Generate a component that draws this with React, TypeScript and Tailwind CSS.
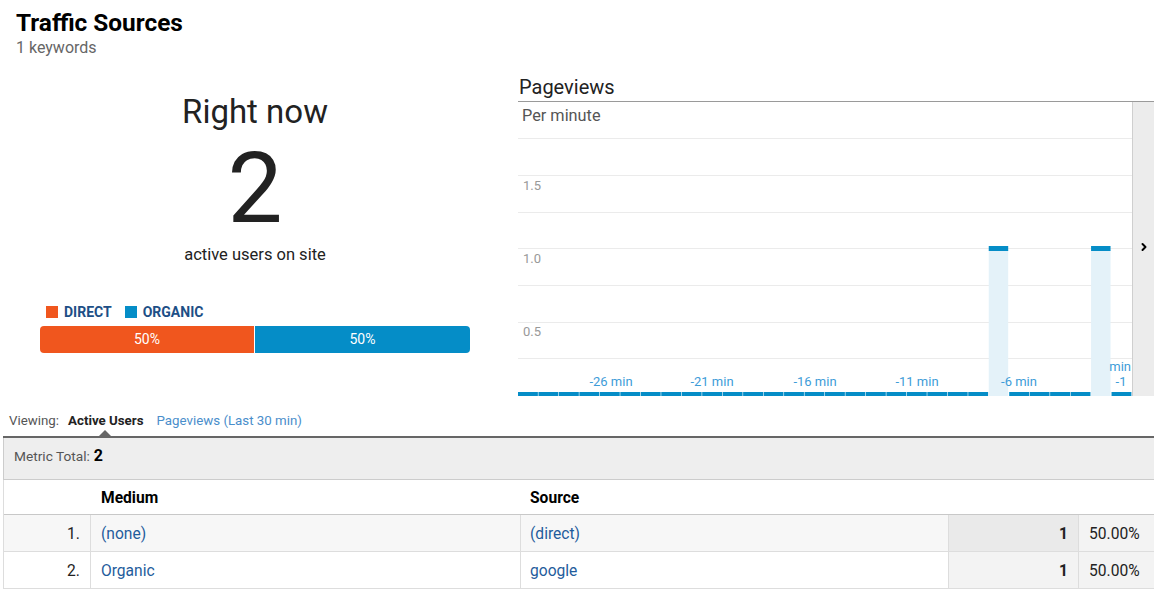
import React from 'react';
import { ChevronRight } from 'lucide-react';

const BLUE = '#058dc7';
const BAR_W = 614 / 30;
const peaks = [23, 28];
const gridY = [36, 73, 110, 146, 183, 220, 256];

const xLabels = [
  { x: 93, t: '-26 min' },
  { x: 194, t: '-21 min' },
  { x: 297, t: '-16 min' },
  { x: 399, t: '-11 min' },
  { x: 501, t: '-6 min' },
];

const rows = [
  { n: '1.', medium: '(none)', source: '(direct)', value: '1', pct: '50.00%', odd: true },
  { n: '2.', medium: 'Organic', source: 'google', value: '1', pct: '50.00%', odd: false },
];

const PageviewsChart: React.FC = () => (
  <svg width={614} height={294} className="block">
    {gridY.map((y) => (
      <line key={y} x1={0} x2={614} y1={y + 0.5} y2={y + 0.5} stroke="#ebebeb" strokeWidth={1} />
    ))}
    <text x={5} y={88} fontSize={13} fill="#999" fontFamily="Roboto, sans-serif">1.5</text>
    <text x={5} y={161} fontSize={13} fill="#999" fontFamily="Roboto, sans-serif">1.0</text>
    <text x={5} y={234} fontSize={13} fill="#999" fontFamily="Roboto, sans-serif">0.5</text>
    {Array.from({ length: 30 }).map((_, i) => {
      const x = i * BAR_W;
      if (peaks.includes(i)) {
        return (
          <g key={i}>
            <rect x={x} y={148} width={BAR_W - 1} height={146} fill="#e4f2f9" />
            <rect x={x} y={144} width={BAR_W - 1} height={5} fill={BLUE} />
          </g>
        );
      }
      return <rect key={i} x={x} y={290} width={BAR_W - 0.6} height={4} fill={BLUE} />;
    })}
    {xLabels.map((l) => (
      <text key={l.t} x={l.x} y={284} fontSize={13} fill="#3d9cd8" textAnchor="middle" fontFamily="Roboto, sans-serif">
        {l.t}
      </text>
    ))}
    <text x={613} y={269} fontSize={13} fill="#3d9cd8" textAnchor="end" fontFamily="Roboto, sans-serif">min</text>
    <text x={603} y={284} fontSize={13} fill="#3d9cd8" textAnchor="middle" fontFamily="Roboto, sans-serif">-1</text>
  </svg>
);

export default function App() {
  return (
    <div className="w-[1154px] h-[596px] bg-white overflow-hidden text-[#222]" style={{ fontFamily: 'Roboto, "Liberation Sans", sans-serif' }}>
      <div className="pl-[16px] pt-[9px]">
        <h1 className="text-[24.4px] leading-[28px] font-bold text-black">Traffic Sources</h1>
        <div className="text-[16px] leading-[21px] text-[#666]">1 keywords</div>
      </div>

      <div className="flex h-[343px]">
        <div className="w-[518px] flex flex-col">
          <div className="w-[510px] text-center">
            <div className="mt-[34px] text-[33px] leading-[40px] text-[#222]">Right now</div>
            <div className="mt-[8px] text-[98px] leading-[98px] text-[#222]">2</div>
            <div className="mt-[7px] text-[16.5px] leading-[20px] text-[#222]">active users on site</div>
          </div>
          <div className="mt-[38px] pl-[46px] flex items-center h-[18px] text-[14px] font-bold text-[#1d4f86]">
            <span className="w-[12px] h-[12px] bg-[#f0561e]" />
            <span className="ml-[6px]">DIRECT</span>
            <span className="ml-[13px] w-[12px] h-[12px] bg-[#058dc7]" />
            <span className="ml-[6px]">ORGANIC</span>
          </div>
          <div className="mt-[5px] ml-[40px] w-[430px] h-[27px] flex rounded-[4px] overflow-hidden text-white text-[14px]">
            <div className="w-[214px] bg-[#f0561e] flex items-center justify-center">50%</div>
            <div className="w-px bg-white" />
            <div className="flex-1 bg-[#058dc7] flex items-center justify-center">50%</div>
          </div>
        </div>

        <div className="flex-1 flex flex-col">
          <div className="mt-[17px] pl-[1px] text-[20px] leading-[24px] text-[#222]">Pageviews</div>
          <div className="mt-[2px] border-b border-[#9a9a9a]" />
          <div className="flex h-[294px]">
            <div className="relative w-[614px]">
              <PageviewsChart />
              <div className="absolute left-[4px] top-[4px] text-[16.3px] leading-[20px] text-[#555]">Per minute</div>
            </div>
            <div className="flex-1 bg-[#ececec] border-l border-[#cfcfcf] flex items-center justify-center">
              <ChevronRight size={12} strokeWidth={4} className="text-black -mt-[4px]" />
            </div>
          </div>
        </div>
      </div>

      <div className="pl-[9px] pt-[10px] h-[35px] flex items-start text-[13.3px] leading-[20px]">
        <span className="text-[#555]">Viewing:</span>
        <span className="relative ml-[9px] font-bold text-[#222]">
          Active Users
          <span className="absolute left-[31px] top-[19px] w-0 h-0 border-l-[6px] border-r-[6px] border-b-[6px] border-l-transparent border-r-transparent border-b-[#666]" />
        </span>
        <span className="ml-[13px] text-[#4a8ecb]">Pageviews (Last 30 min)</span>
      </div>

      <div className="ml-[3px] border-t-2 border-[#666]">
        <div className="h-[42px] bg-[#eeeeee] border-l border-b border-[#cccccc] flex items-baseline pt-[8px] pl-[10px] text-[13.7px] leading-[20px]">
          <span className="text-[#555]">Metric Total:</span>
          <span className="ml-[4px] text-[16px] font-bold text-black">2</span>
        </div>
        <div className="border-l border-[#dddddd]">
          <div className="grid grid-cols-[87px_430px_428px_130px_1fr] h-[35px] items-center pt-[3px] border-b border-[#c8c8c8] text-[15.6px] font-bold text-black">
            <div />
            <div className="pl-[10px]">Medium</div>
            <div className="pl-[9px]">Source</div>
            <div />
            <div />
          </div>
          {rows.map((r) => (
            <div
              key={r.n}
              className={`grid grid-cols-[87px_430px_428px_130px_1fr] h-[37px] border-b border-[#dddddd] text-[15.6px] ${r.odd ? 'bg-[#f7f7f7]' : 'bg-white'}`}
            >
              <div className="flex items-center justify-end pt-[3px] pr-[10px] border-r border-[#dddddd] text-[#222]">{r.n}</div>
              <div className="flex items-center pt-[3px] pl-[10px] border-r border-[#dddddd] text-[#1f5c9c]">{r.medium}</div>
              <div className="flex items-center pt-[3px] pl-[9px] border-r border-[#dddddd] text-[#1f5c9c]">{r.source}</div>
              <div className={`flex items-center justify-end pt-[3px] pr-[10px] border-r border-[#dddddd] font-bold text-[#222] ${r.odd ? 'bg-[#eaeaea]' : 'bg-[#f3f3f3]'}`}>
                {r.value}
              </div>
              <div className="flex items-center pt-[3px] pl-[10px] bg-[#f3f3f3] text-[#222]">{r.pct}</div>
            </div>
          ))}
        </div>
      </div>
    </div>
  );
}
